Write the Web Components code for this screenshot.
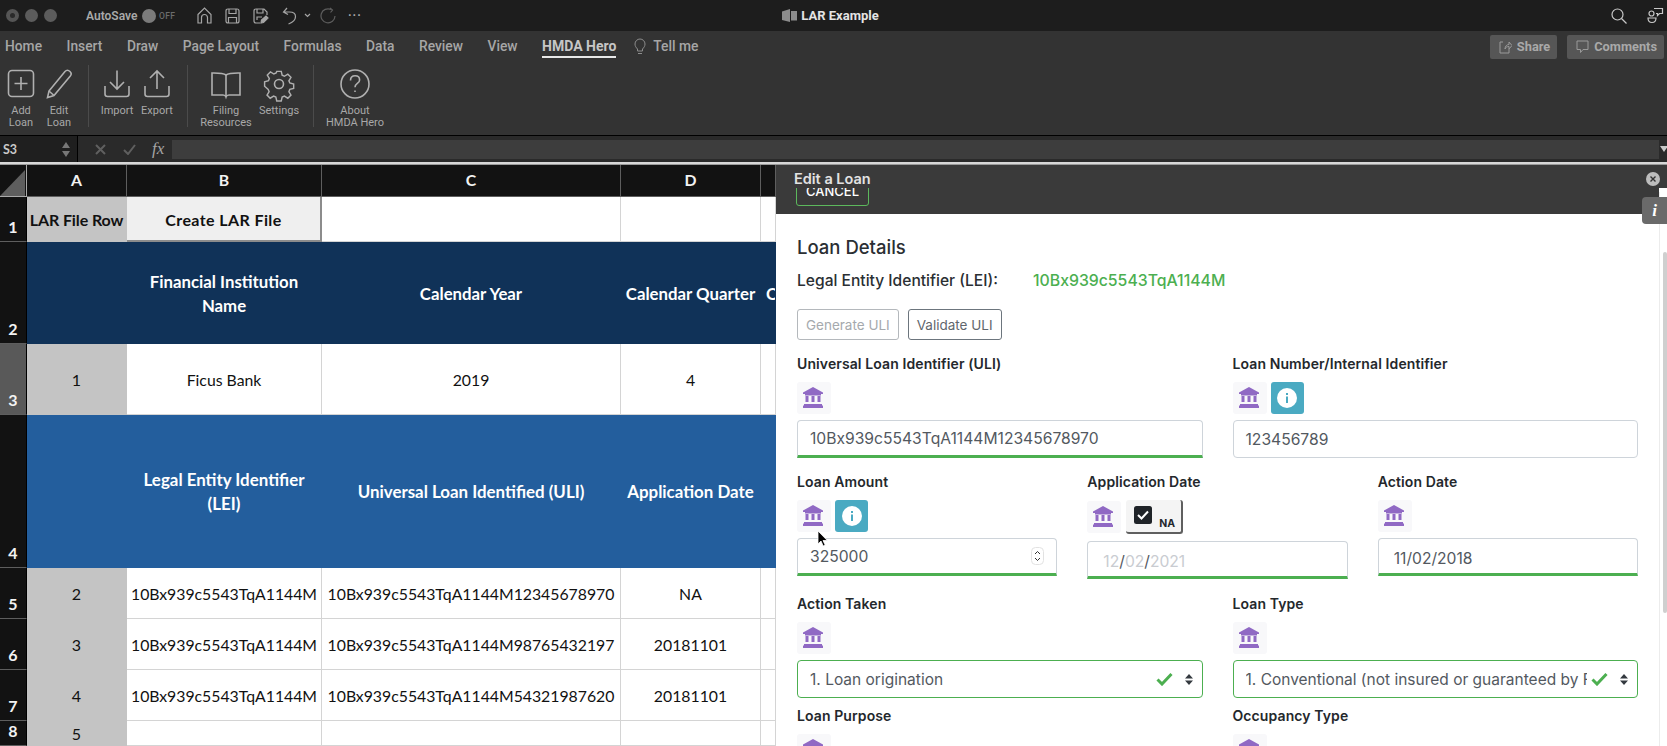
<!DOCTYPE html>
<html>
<head>
<meta charset="utf-8">
<title>LAR Example</title>
<style>
  html,body { margin:0; padding:0; height:100%; overflow:hidden; background:#333; }
  body { font-family:"Inter","Liberation Sans",sans-serif; }
</style>
</head>
<body>
<app-window>
  <title-bar slot="top"></title-bar>
  <ribbon-tabs slot="top"></ribbon-tabs>
  <ribbon-bar slot="top">
    <ribbon-btn w="38" icon="add">Add<br>Loan</ribbon-btn>
    <ribbon-btn w="38" icon="edit">Edit<br>Loan</ribbon-btn>
    <ribbon-sep l="10" r="8"></ribbon-sep>
    <ribbon-btn w="40" icon="import">Import</ribbon-btn>
    <ribbon-btn w="40" icon="export">Export</ribbon-btn>
    <ribbon-sep l="10" r="8"></ribbon-sep>
    <ribbon-btn w="60" icon="book">Filing<br>Resources</ribbon-btn>
    <ribbon-btn w="46" icon="gear">Settings</ribbon-btn>
    <ribbon-sep l="11" r="6"></ribbon-sep>
    <ribbon-btn w="70" icon="help">About<br>HMDA Hero</ribbon-btn>
  </ribbon-bar>
  <formula-bar slot="top"></formula-bar>
  <sheet-grid slot="sheet"></sheet-grid>
  <loan-panel slot="panel">
    <h-title>Loan Details</h-title>
    <lei-row></lei-row>
    <btn-row></btn-row>
    <form-row cols="2" top="14">
      <form-field label="Universal Loan Identifier (ULI)"><text-box value="10Bx939c5543TqA1144M12345678970" ok></text-box></form-field>
      <form-field label="Loan Number/Internal Identifier" info><text-box value="123456789"></text-box></form-field>
    </form-row>
    <form-row cols="3" top="14">
      <form-field label="Loan Amount" info><text-box value="325000" ok spin></text-box></form-field>
      <form-field label="Application Date" na><text-box date="12/02/2021" ok></text-box></form-field>
      <form-field label="Action Date"><text-box value="11/02/2018" ok pad="15"></text-box></form-field>
    </form-row>
    <form-row cols="2" top="15">
      <form-field label="Action Taken"><select-box value="1. Loan origination"></select-box></form-field>
      <form-field label="Loan Type"><select-box value="1. Conventional (not insured or guaranteed by FHA, VA, RHS, or FSA)"></select-box></form-field>
    </form-row>
    <form-row cols="2" top="8">
      <form-field label="Loan Purpose"></form-field>
      <form-field label="Occupancy Type"></form-field>
    </form-row>
  </loan-panel>
</app-window>

<script>
(()=>{
  // every element here is only a template + a style, so share that bit
  class Base extends HTMLElement {
    connectedCallback(){
      if(this.shadowRoot) return;
      this.attachShadow({mode:"open"});
      const template = document.createElement("template");
      template.innerHTML = `<style>${this.css()}</style>${this.html()}`;
      this.shadowRoot.appendChild(template.content.cloneNode(true));
    }
    css(){ return ":host{display:block}"; }
    html(){ return "<slot></slot>"; }
  }

  const ribbonIcons = {
    add:`<rect x="3.5" y="2.5" width="25" height="26" rx="3.5"/><path d="M16 9v13M9.5 15.5h13"/>`,
    edit:`<path d="M6 23 22 3.5c1.5-1.6 3.6-1.3 5 0s1.4 3.2.3 4.6L11 27.5l-6.500 2z"/><path d="M6 23l5 4.500"/>`,
    import:`<path d="M16 2.500v18M9 14l7 7 7-7"/><path d="M4 18v8c0 1.500 1 2.500 2.500 2.500h19c1.500 0 2.500-1 2.500-2.500v-8"/>`,
    export:`<path d="M16 21V3M9 10l7-7 7 7"/><path d="M4 18v8c0 1.500 1 2.500 2.500 2.500h19c1.500 0 2.500-1 2.500-2.500v-8"/>`,
    book:`<path d="M16 7c-2-1.500-5-2-12-2H2v22h11c1.500 0 2.500.5 3 2 .5-1.500 1.500-2 3-2h11V5h-2c-7 0-10 .5-12 2z"/><path d="M16 7v21"/>`,
    gear:`<circle cx="16" cy="16" r="4.500"/><path d="M13.500 2h5l1 4.300 2.500 1.100 3.800-2.300 3.500 3.500-2.300 3.800 1 2.500 4.300 1.100v5l-4.300 1-1 2.500 2.300 3.800-3.500 3.500-3.800-2.300-2.500 1-1 4.300h-5l-1-4.300-2.500-1-3.800 2.300-3.500-3.500 2.300-3.800-1-2.500L0 18.500v-5l4.300-1.100 1-2.500L3 6.100l3.500-3.500 3.800 2.300 2.500-1.100z" transform="translate(1.600 1.600) scale(.9)"/>`,
    help:`<circle cx="16" cy="16" r="14"/><path d="M11.500 12.500c0-3 2-4.700 4.600-4.700s4.500 1.700 4.500 4.100c0 3.600-4.600 3.500-4.600 7.300"/><path d="M16 22.500v1.500"/>`
  };

  customElements.define("app-window", class extends Base {
    css(){ return `
      :host { display:flex; flex-direction:column; width:1667px; height:746px; overflow:hidden; }
      .work { display:flex; flex:1; min-height:0; position:relative; }
      .line { height:3px; background:#d8d8d8; box-sizing:border-box; border-bottom:1px solid #9a9a9a; }
      ::slotted([slot=sheet]) { width:776px; flex:none; }
      ::slotted([slot=panel]) { flex:1; min-width:0; }
      svg.cursor { position:absolute; left:817px; top:365px; }`; }
    html(){ return `<slot name="top"></slot><div class="line"></div>
      <div class="work"><slot name="sheet"></slot><slot name="panel"></slot>
      <svg class="cursor" width="12" height="17" viewBox="0 0 12 17"><path d="M1 1v13l3-3 2.200 5 2-.9L6 10.500h4.300z" fill="#000" stroke="#fff" stroke-width=".8"/></svg></div>`; }
  });

  customElements.define("title-bar", class extends Base {
    css(){ return `
      :host { display:grid; grid-template-columns:1fr auto 1fr; align-items:center; height:31px; background:#1d1d1d; color:#a9a9a9; font:600 12px "Roboto","Liberation Sans",sans-serif; }
      .left,.right { display:flex; align-items:center; }
      .dot { width:13px; height:13px; border-radius:50%; background:#5c5c5c; margin-right:6px; }
      .dot.first { background:#555; display:flex; align-items:center; justify-content:center; }
      .dot.first i { width:5px; height:5px; border-radius:50%; background:#2a2a2a; }
      .left { padding-left:6px; }
      .auto { width:56px; margin-left:23px; }
      .tog { width:14px; height:14px; border-radius:50%; background:#7b7b7b; }
      .off { font:500 8.500px "Roboto",sans-serif; color:#6c6c6c; margin-left:3px; width:17px; letter-spacing:.4px; }
      svg { display:block; fill:none; stroke:#a5a5a5; stroke-width:1.200; }
      .title { display:flex; align-items:center; gap:3px; color:#e4e4e4; font:700 13px "Roboto","Liberation Sans",sans-serif; padding-right:6px; }
      .right { justify-content:flex-end; gap:20px; padding-right:3px; }
      .right svg { stroke:#c8c8c8; }
      .ic { margin-left:13px; }
      .more { margin-left:14px; letter-spacing:1px; font-size:12px; font-weight:700; }`; }
    html(){ return `
      <div class="left">
        <span class="dot first"><i></i></span><span class="dot"></span><span class="dot"></span>
        <span class="auto">AutoSave</span><span class="tog"></span><span class="off">OFF</span>
        <svg class="ic" style="margin-left:21px" width="15" height="17" viewBox="0 0 15 17"><path d="M1 7.500 7.500 1 14 7.500V16h-3.500v-5.500a3 3 0 0 0-6 0V16H1z"/></svg>
        <svg class="ic" width="15" height="16" viewBox="0 0 15 16"><path d="M1 3q0-2 2-2h9q2 0 2 2v10q0 2-2 2H3q-2 0-2-2zM4 1v4.500h7V1M3.500 15V9.500h8V15"/></svg>
        <svg class="ic" width="16" height="16" viewBox="0 0 16 16"><path d="M7 15H3q-2 0-2-2V3q0-2 2-2h8l3 3v3M4 1v4h6V1M4 12V9h5"/><path d="m8 15 .5-3L13 8l2 2-4.500 4.500z" fill="#a5a5a5"/></svg>
        <svg class="ic" width="15" height="18" viewBox="0 0 15 18"><path d="M5 1 1.500 5l4.500 2.500M1.500 5h6c3.500 0 6 1.500 6 4.500 0 3-3 6-7 7.500"/></svg>
        <svg style="margin-left:7px" width="7" height="5" viewBox="0 0 7 5"><path d="m1 1 2.500 2.500L6 1"/></svg>
        <svg style="margin-left:9px;stroke:#5d5d5d" width="16" height="18" viewBox="0 0 16 18"><path d="M11 2.500A7 7 0 1 0 15 9M10 1l2.500 2-2 2.500"/></svg>
        <span class="more" style="margin-left:12px">···</span>
      </div>
      <div class="title">
        <svg width="16" height="15" viewBox="0 0 16 15" style="stroke:none;fill:#8c8c8c"><path d="M0 3.500 8 1v13l-8-2zM9 3h6v9.500H9z"/></svg>
        <span>LAR Example</span>
      </div>
      <div class="right">
        <svg width="16" height="16" viewBox="0 0 16 16"><circle cx="6.500" cy="6.500" r="5.500"/><path d="m10.500 10.500 5 5"/></svg>
        <svg width="17" height="17" viewBox="0 0 17 17"><circle cx="4.500" cy="6.500" r="2.500"/><path d="M1 11h8q0 4.500-4 4.500T1 11zM7 1.500h8.500v5h-3l-2 2v-2H9"/></svg>
      </div>`; }
  });

  customElements.define("ribbon-tabs", class extends Base {
    css(){ return `
      :host { display:flex; align-items:flex-start; height:31px; background:#333; box-sizing:border-box; padding-left:5px; color:#a6a6a6; font:500 13.800px "Roboto","Liberation Sans",sans-serif; position:relative; }
      span { line-height:30px; margin-right:24.500px; white-space:nowrap; }
      .on { color:#c6c6c6; font-weight:700; font-size:14px; position:relative; margin-right:18px; }
      .on::after { content:""; position:absolute; left:0; right:0; top:25px; height:2px; background:#e8e8e8; }
      svg { margin:7px 7px 0 0; fill:none; stroke:#8d8d8d; }
      .acts { margin-left:auto; display:flex; gap:10px; padding:4px 3px 0 0; }
      .act { display:flex; align-items:center; gap:5px; height:24px; box-sizing:border-box; padding:0 7px 0 9px; background:#565656; border-radius:2px; color:#a9a9a9; font-weight:700; font-size:12.800px; line-height:24px; }
      .act svg { margin:0; stroke:#9a9a9a; }`; }
    html(){ return `
      <span>Home</span><span>Insert</span><span>Draw</span><span>Page Layout</span><span>Formulas</span><span>Data</span><span>Review</span><span>View</span>
      <span class="on">HMDA Hero</span>
      <svg width="12" height="17" viewBox="0 0 12 17"><path d="M3.500 11C2 9.500 1 8 1 6a5 5 0 0 1 10 0c0 2-1 3.500-2.500 5v2h-5zM4 15.500h4"/></svg><span>Tell me</span>
      <div class="acts">
        <div class="act"><svg width="13" height="13" viewBox="0 0 13 13"><path d="M4 1H1v11h9V8M6 8c0-3 2-4.500 4-4.500V1l3 3.500L10 8V5.500C8 5.500 6.500 6.500 6 8z"/></svg>Share</div>
        <div class="act"><svg width="13" height="14" viewBox="0 0 13 14"><path d="M1 1h11v8.500H7L4.500 12.500v-3H1z"/></svg>Comments</div>
      </div>`; }
  });

  customElements.define("ribbon-bar", class extends Base {
    css(){ return `:host { display:flex; height:73px; padding-left:2px; background:#333; border-bottom:1px solid #000; box-sizing:content-box; }`; }
  });

  customElements.define("ribbon-btn", class extends Base {
    css(){ return `
      :host { display:block; width:${this.getAttribute("w")}px; padding-top:6px; text-align:center; color:#a8a8a8; font:400 11px/12px "Roboto","Liberation Sans",sans-serif; }
      svg { display:block; margin:0 auto 1px; fill:none; stroke:#b0b0b0; stroke-width:1.600; }
      div { white-space:nowrap; }`; }
    html(){ return `<svg width="32" height="36" viewBox="0 0 32 36">${ribbonIcons[this.getAttribute("icon")]}</svg><div><slot></slot></div>`; }
  });

  customElements.define("ribbon-sep", class extends Base {
    css(){ return `:host { display:block; width:1px; height:62px; margin:3px ${this.getAttribute("r")}px 0 ${this.getAttribute("l")}px; background:#4b4b4b; }`; }
    html(){ return ""; }
  });

  customElements.define("formula-bar", class extends Base {
    css(){ return `
      :host { display:flex; align-items:center; height:26px; background:#2a2a2a; color:#a5a5a5; font:700 12.500px "Lato","Liberation Sans",sans-serif; }
      .name { display:flex; align-items:center; justify-content:space-between; width:78px; box-sizing:border-box; height:26px; padding:0 7px 0 3px; background:#1f1f1f; color:#c9c9c9; border-right:1px solid #000; }
      .arr { display:flex; flex-direction:column; gap:3px; }
      .arr i { width:0; height:0; border:4px solid transparent; }
      .arr i:first-child { border-top:0; border-bottom:6px solid #777; }
      .arr i:last-child { border-bottom:0; border-top:6px solid #777; }
      svg { display:block; fill:none; stroke:#5f5f5f; stroke-width:2; }
      .fx { font:italic 400 17px "Liberation Serif",serif; color:#a5a5a5; margin-left:16px; width:20px; }
      .input { flex:1; height:19px; background:#3d3d3d; }
      .drop { width:8px; }
      .drop i { display:block; width:0; height:0; margin-left:1px; border:4px solid transparent; border-top:6px solid #c8c8c8; border-bottom:0; }`; }
    html(){ return `
      <div class="name"><span>S3</span><span class="arr"><i></i><i></i></span></div>
      <svg style="margin-left:17px" width="11" height="11" viewBox="0 0 11 11"><path d="m1 1 9 9M10 1l-9 9"/></svg>
      <svg style="margin-left:17px" width="13" height="11" viewBox="0 0 13 11"><path d="m1 6 4 4 7-9"/></svg>
      <span class="fx">fx</span><div class="input"></div><div class="drop"><i></i></div>`; }
  });

  const GRID = [
    {h:"1", rows:[["LAR File Row","a b"],["Create LAR File","btn"],["",""],["",""],["",""]]},
    {h:"2", rows:[["","dk"],["Financial Institution<br>Name","dk"],["Calendar Year","dk"],["Calendar Quarter","dk"],["C","dk e"]]},
    {h:"3", sel:1, rows:[["1","a"],["Ficus Bank",""],["2019",""],["4",""],["",""]]},
    {h:"4", rows:[["","bl"],["Legal Entity Identifier<br>(LEI)","bl"],["Universal Loan Identified (ULI)","bl"],["Application Date","bl"],["","bl"]]},
    {h:"5", rows:[["2","a"],["10Bx939c5543TqA1144M",""],["10Bx939c5543TqA1144M12345678970",""],["NA",""],["",""]]},
    {h:"6", rows:[["3","a"],["10Bx939c5543TqA1144M",""],["10Bx939c5543TqA1144M98765432197",""],["20181101",""],["",""]]},
    {h:"7", rows:[["4","a"],["10Bx939c5543TqA1144M",""],["10Bx939c5543TqA1144M54321987620",""],["20181101",""],["",""]]},
    {h:"8", rows:[["5","a"],["",""],["",""],["",""],["",""]]}
  ];

  customElements.define("sheet-grid", class extends Base {
    css(){ return `
      :host { display:grid; grid-template-columns:27px 100px 195px 299px 140px 1fr; grid-template-rows:32px 45px 102px 71px 153px 51px 51px 51px 1fr; overflow:hidden; background:#fff; font:400 15.800px "Lato","Liberation Sans",sans-serif; color:#111; }
      div { display:flex; align-items:center; justify-content:center; text-align:center; box-sizing:border-box; white-space:nowrap; min-width:0; overflow:hidden; border-right:1px solid #d4d4d4; border-bottom:1px solid #d4d4d4; line-height:24px; padding-top:1px; }
      .hd { background:#121212; color:#f2f2f2; font-weight:700; border-color:#5e5e5e; padding:0 0 1px; }
      .corner { background:#121212; border-right:1px solid #aaa; border-bottom:1px solid #aaa; position:relative; }
      .corner::after { content:""; position:absolute; left:0; top:5px; width:25px; height:26px; background:#5e5e5e; clip-path:polygon(100% 0,100% 100%,0 100%); }
      .rh { align-items:flex-end; padding:0 0 2px; background:#121212; color:#f2f2f2; font-weight:700; font-size:16px; border-right:1px solid #000; border-bottom:1px solid #5e5e5e; }
      .rh.sel { background:#595959; }
      .a { background:#c4c4c4; border-color:#c4c4c4; font-size:16px; }
      .b { font-weight:700; font-size:16px; letter-spacing:-.1px; padding-top:2px; }
      .btn { background:#efefef; font-weight:700; font-size:16px; border-right:2px solid #8c8c8c; border-bottom:2px solid #8c8c8c; letter-spacing:.4px; padding-top:2px; }
      .dk { background:#103258; color:#fff; font-weight:700; font-size:16.800px; border-color:#103258; padding-top:3px; }
      .bl { background:#235e9d; color:#fff; font-weight:700; font-size:16.900px; border-color:#235e9d; }
      .e { justify-content:flex-start; padding-left:5px; }`; }
    html(){
      let out = `<div class="corner"></div>`;
      ["A","B","C","D","E"].forEach(c=>{ out += `<div class="hd">${c==="E"?"":c}</div>`; });
      GRID.forEach(r=>{
        out += `<div class="rh${r.sel?" sel":""}">${r.h}</div>`;
        r.rows.forEach(([t,k])=>{ out += `<div class="${k}">${t}</div>`; });
      });
      return out;
    }
  });

  customElements.define("loan-panel", class extends Base {
    css(){ return `
      :host { display:block; position:relative; background:#fff; overflow:hidden; color:#212529; }
      .head { height:49px; background:#3a3a3a; position:relative; margin-right:8px; }
      .bar { position:absolute; left:0; right:-8px; top:0; height:23px; background:#3a3a3a; color:#e2e2e2; font:600 14.500px/28px "Inter",sans-serif; padding-left:18px; z-index:1; }
      .cancel { position:absolute; left:20px; top:8px; width:73px; height:33px; box-sizing:border-box; border:1px solid #5cb85c; border-radius:3px; color:#fff; font:500 13px/35px "Inter",sans-serif; text-align:center; }
      .close { position:absolute; right:-1px; top:7px; width:14px; height:14px; border-radius:50%; background:#bdbdbd; z-index:2; display:flex; }
      .close svg { display:block; }
      .tab { position:absolute; right:0; top:32px; width:25px; height:27px; border-radius:4px 0 0 4px; background:#6a6a6a; color:#fff; font:italic 700 17px/27px "Liberation Serif",serif; text-align:center; z-index:2; }
      .track { position:absolute; right:0; top:27px; bottom:0; width:8px; background:#fff; border-left:1px solid #ececec; box-sizing:border-box; }
      .thumb { position:absolute; right:0; top:60px; height:361px; width:4px; background:#cfcfcf; border-radius:2px; }
      .body { padding:21px 29px 0 21px; }`; }
    html(){ return `
      <div class="head">
        <div class="bar">Edit a Loan</div>
        <div class="cancel">CANCEL</div>
        <div class="close"><svg width="14" height="14" viewBox="0 0 14 14"><path d="m4.500 4.500 5 5M9.500 4.500l-5 5" stroke="#333" stroke-width="1.400" fill="none"/></svg></div>
      </div>
      <div class="track"><div class="thumb"></div></div>
      <div class="tab">i</div>
      <div class="body"><slot></slot></div>`; }
  });

  customElements.define("h-title", class extends Base {
    css(){ return `:host { display:block; font:500 18.500px/24px "Inter",sans-serif; color:#2b2f33; }`; }
  });

  customElements.define("lei-row", class extends Base {
    css(){ return `
      :host { display:flex; margin-top:10px; font:500 15.600px/24px "Inter",sans-serif; color:#2b2f33; }
      b { font-weight:500; width:236px; }
      span { color:#4caf50; font-size:15.800px; }`; }
    html(){ return `<b>Legal Entity Identifier (LEI):</b><span>10Bx939c5543TqA1144M</span>`; }
  });

  customElements.define("btn-row", class extends Base {
    css(){ return `
      :host { display:flex; gap:9px; margin-top:16px; }
      div { height:31px; box-sizing:border-box; border:1px solid #6c757d; border-radius:3px; padding:0 8px; font:400 13.500px/30px "Inter",sans-serif; color:#5f666d; }
      .off { border-color:#b4b8bc; color:#a5a9ad; }`; }
    html(){ return `<div class="off">Generate ULI</div><div>Validate ULI</div>`; }
  });

  customElements.define("form-row", class extends Base {
    css(){ return `:host { display:grid; grid-template-columns:repeat(${this.getAttribute("cols")},1fr); column-gap:30px; margin-top:${this.getAttribute("top")}px; }`; }
  });

  customElements.define("bank-icon", class extends Base {
    css(){ return `
      :host { display:flex; align-items:center; justify-content:center; width:34px; height:32px; background:#f8f8fa; border-radius:3px; flex:none; padding:0 2px 2px 0; box-sizing:border-box; }
      svg { display:block; fill:#9069c4; }`; }
    html(){ return `<svg width="20" height="21" viewBox="0 0 20 21"><path d="M10 0 20 5.500V7H0V5.500z"/><path d="M2 8.500h16V7H2zM2.500 9h3v6h-3zM8.500 9h3v6h-3zM14.500 9h3v6h-3zM1 17h18v1.500H1zM0 18.500h20V21H0z"/></svg>`; }
  });

  customElements.define("form-field", class extends Base {
    css(){ return `
      :host { display:block; min-width:0; }
      .lab { font:600 14px/20px "Inter",sans-serif; color:#24282c; letter-spacing:.1px; }
      .icons { display:flex; align-items:center; gap:4px; margin:8px 0 6px; }
      .icons.tall { margin-bottom:7px; }
      .info { display:flex; align-items:center; justify-content:center; width:33px; height:32px; background:#4aaac2; border-radius:3px; }
      .info svg { display:block; }
      .na { display:flex; align-items:flex-start; width:57px; height:34px; margin-left:1px; box-sizing:border-box; background:#f4f4f4; border-right:2px solid #5f5f5f; border-bottom:2px solid #5f5f5f; border-radius:3px; padding:6px 0 0 8px; font:700 10.500px "Inter",sans-serif; color:#24282c; }
      .na svg { display:block; margin-right:7px; }
      .na span { padding-top:11px; }`; }
    html(){
      const info = this.hasAttribute("info") ? `<div class="info"><svg width="20" height="20" viewBox="0 0 20 20"><circle cx="10" cy="10" r="10" fill="#fff"/><path d="M9 8.500h2V15H9zM9 5h2v2H9z" fill="#4aaac2"/></svg></div>` : "";
      const na = this.hasAttribute("na") ? `<div class="na"><svg width="18" height="18" viewBox="0 0 18 18"><rect width="18" height="18" rx="2.500" fill="#1f2328"/><path d="m4 9 3.500 3.500L14 5.500" fill="none" stroke="#fff" stroke-width="2"/></svg><span>NA</span></div>` : "";
      return `<div class="lab">${this.getAttribute("label")}</div><div class="icons${na?" tall":""}"><bank-icon></bank-icon>${info}${na}</div><slot></slot>`;
    }
  });

  customElements.define("text-box", class extends Base {
    css(){
      const ok = this.hasAttribute("ok");
      const pad = this.getAttribute("pad") || 12;
      const dateLike = this.hasAttribute("date") || this.hasAttribute("pad");
      return `
      :host { display:flex; align-items:center; justify-content:space-between; height:38px; box-sizing:border-box; border:1px solid #ced4da; border-radius:4px 4px ${ok?0:4}px ${ok?0:4}px; ${ok?"border-bottom:3px solid #4caf50;":""} padding:${dateLike?4:0}px 12px 0 ${pad}px; font:400 15.650px "Inter",sans-serif; color:#53595f; background:#fff; overflow:hidden; white-space:nowrap; }
      .dim { color:#c9ccd1; }
      svg { display:block; }`;
    }
    html(){
      const date = this.getAttribute("date");
      if(date) {
        const [m,d,y] = date.split("/");
        return `<span style="padding-left:3px"><span class="dim">${m}</span>/<span class="dim">${d}</span>/<span class="dim">${y}</span></span>`;
      }
      const spin = this.hasAttribute("spin") ? `<svg width="13" height="18" viewBox="0 0 13 18"><rect x=".5" y=".5" width="12" height="17" rx="4" fill="#fff" stroke="#e2e2e2"/><path d="m4 7 2.500-2.500L9 7M4 11l2.500 2.500L9 11" fill="none" stroke="#333" stroke-width="1"/></svg>` : "";
      return `<span>${this.getAttribute("value")}</span>${spin}`;
    }
  });

  customElements.define("select-box", class extends Base {
    css(){ return `
      :host { display:flex; align-items:center; height:38px; box-sizing:border-box; border:1px solid #4caf50; border-radius:4px; padding:0 9px 0 12px; font:400 15.500px "Inter",sans-serif; color:#53595f; background:#fff; }
      span { flex:1; min-width:0; overflow:hidden; white-space:nowrap; margin-right:4px; }
      svg { display:block; flex:none; }`; }
    html(){ return `<span>${this.getAttribute("value")}</span>
      <svg width="17" height="14" viewBox="0 0 17 14"><path d="m1.500 7.500 4.500 4.500L15.500 2" fill="none" stroke="#4caf50" stroke-width="3"/></svg>
      <svg style="margin-left:12px" width="8" height="11" viewBox="0 0 8 11"><path d="M4 0 8 4.500H0zM4 11 0 6.500h8z" fill="#343a40"/></svg>`; }
  });
})();
</script>
</body>
</html>
